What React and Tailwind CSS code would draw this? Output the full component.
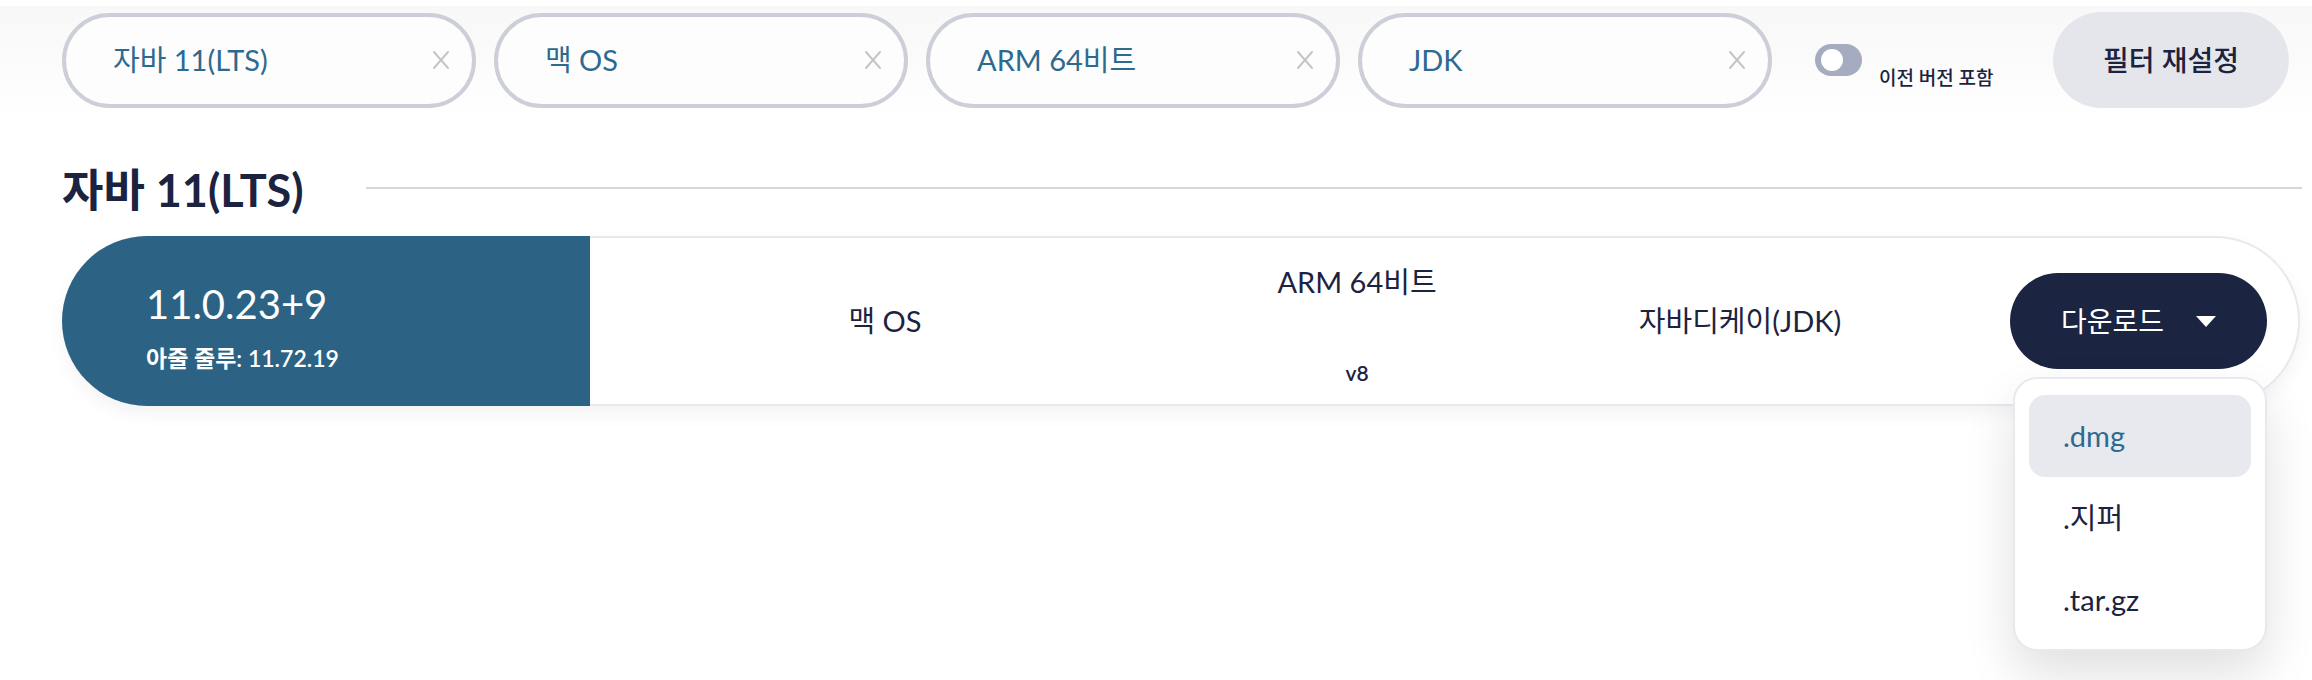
import React, { useState } from "react";

const filters = ["자바 11(LTS)", "맥 OS", "ARM 64비트", "JDK"];
const packages = [".dmg", ".지퍼", ".tar.gz"];

function CloseIcon() {
  return (
    <svg width="20" height="20" viewBox="0 0 20 20" className="shrink-0">
      <path d="M3 2 L17 18 M17 2 L3 18" stroke="#c4c5c9" strokeWidth="2" strokeLinecap="round" />
    </svg>
  );
}

function FilterChip({ label }) {
  return (
    <div className="w-[414px] h-[95px] shrink-0 flex items-center justify-between rounded-full border-[4px] border-[#cdcfd8] bg-[#fdfdfd] pl-[47px] pr-[21px]">
      <span className="text-[29px] text-[#2d6a8f]">{label}</span>
      <CloseIcon />
    </div>
  );
}

export default function App() {
  const [includeOld, setIncludeOld] = useState(false);
  const [menuOpen, setMenuOpen] = useState(true);

  return (
    <div className="min-h-[680px] bg-white font-['Lato','Noto_Sans_CJK_KR',sans-serif] text-[#1b2340]">
      {/* filter bar */}
      <div className="mt-[6px] pt-[6px] pb-[10px] pl-[62px] pr-[23px] bg-gradient-to-b from-[#f8f8f9] via-[#fbfbfc] to-white">
        <div className="flex items-center">
          <div className="flex gap-[18px]">
            {filters.map((f) => (
              <FilterChip key={f} label={f} />
            ))}
          </div>
          <div className="flex items-start ml-[43px] self-start mt-[32px]">
            <button
              type="button"
              onClick={() => setIncludeOld(!includeOld)}
              className="w-[47px] h-[32px] rounded-full bg-[#a6acbf] flex items-center px-[6px]"
            >
              <span className="w-[22px] h-[22px] rounded-full bg-white" />
            </button>
            <span className="ml-[17px] mt-[20px] text-[19px] font-medium">이전 버전 포함</span>
          </div>
          <button
            type="button"
            className="ml-auto w-[236px] h-[96px] rounded-full bg-[#e5e6eb] text-[28px] font-medium text-[#1b2340]"
          >
            필터 재설정
          </button>
        </div>
      </div>

      {/* section */}
      <div className="pl-[62px] pr-[10px]">
        <div className="flex items-center mt-[50px]">
          <h2 className="text-[45px] font-bold leading-none">자바 11(LTS)</h2>
          <div className="flex-1 ml-[62px] h-[2px] bg-[#d3d6da] -mt-[6px]" />
        </div>

        <div className="relative mt-[23px] mr-[2px] h-[170px] flex rounded-full border-2 border-[#e8e8ee] bg-white shadow-[0_8px_18px_rgba(0,0,0,0.05)]">
          <div className="w-[528px] -my-[2px] -ml-[2px] rounded-l-full bg-[#2c6384] text-white flex flex-col justify-center pl-[84px] pt-[12px]">
            <div className="text-[40px] leading-none">11.0.23+9</div>
            <div className="mt-[23px] text-[23px] font-semibold leading-none">아줄 줄루: 11.72.19</div>
          </div>

          <div className="w-[590px] flex items-center justify-center text-[29px]">맥 OS</div>
          <div className="w-[354px] flex flex-col items-center justify-between pt-[22px] pb-[16px]">
            <span className="text-[29px]">ARM 64비트</span>
            <span className="text-[21px] font-semibold">v8</span>
          </div>
          <div className="w-[412px] flex items-center justify-center text-[29px]">자바디케이(JDK)</div>

          <div className="flex-1 flex items-center justify-end pr-[31px]">
            <button
              type="button"
              onClick={() => setMenuOpen(!menuOpen)}
              className="w-[257px] h-[96px] rounded-full bg-[#1b2441] text-white flex items-center pl-[51px]"
            >
              <span className="text-[28px]">다운로드</span>
              <svg width="20" height="11" viewBox="0 0 20 11" className="ml-[32px]">
                <path d="M0 0 H20 L10 11 Z" fill="white" />
              </svg>
            </button>
          </div>

          {menuOpen && (
            <div className="absolute right-[31px] top-[139px] w-[254px] rounded-[24px] border-2 border-[#e8e8ee] bg-white pt-[16px] pb-[8px] px-[14px] shadow-[0_24px_50px_rgba(0,0,0,0.12)]">
              {packages.map((p, i) => (
                <div
                  key={p}
                  className={
                    i === 0
                      ? "h-[82px] rounded-[16px] bg-[#e8e9ee] flex items-center pl-[34px] text-[29px] text-[#2d6a8f]"
                      : "h-[82px] rounded-[16px] flex items-center pl-[34px] text-[29px] text-[#1b2340]"
                  }
                >
                  {p}
                </div>
              ))}
            </div>
          )}
        </div>
      </div>
    </div>
  );
}
